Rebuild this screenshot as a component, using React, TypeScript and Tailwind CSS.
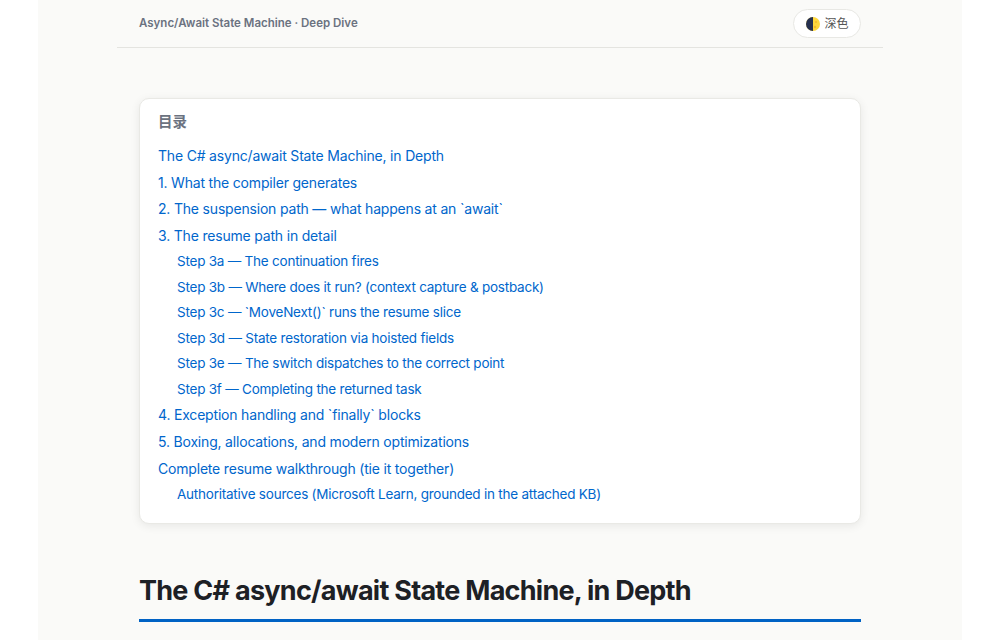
const items: [string, number][] = [
  ["The C# async/await State Machine, in Depth", 0],
  ["1. What the compiler generates", 0],
  ["2. The suspension path — what happens at an `await`", 0],
  ["3. The resume path in detail", 0],
  ["Step 3a — The continuation fires", 1],
  ["Step 3b — Where does it run? (context capture & postback)", 1],
  ["Step 3c — `MoveNext()` runs the resume slice", 1],
  ["Step 3d — State restoration via hoisted fields", 1],
  ["Step 3e — The switch dispatches to the correct point", 1],
  ["Step 3f — Completing the returned task", 1],
  ["4. Exception handling and `finally` blocks", 0],
  ["5. Boxing, allocations, and modern optimizations", 0],
  ["Complete resume walkthrough (tie it together)", 0],
  ["Authoritative sources (Microsoft Learn, grounded in the attached KB)", 1],
]

function MoonIcon() {
  return (
    <svg width="14" height="14" viewBox="0 0 14 14">
      <circle cx="7" cy="7" r="7" fill="#ffd83d" />
      <path d="M7 0a7 7 0 0 0 0 14z" fill="#26304f" />
      <circle cx="10" cy="5" r="1" fill="#f2b92c" />
      <circle cx="9" cy="10" r="1.2" fill="#f2b92c" />
    </svg>
  )
}

export default function App() {
  return (
    <div className="h-[640px] overflow-hidden bg-white font-['Inter','Noto_Sans_CJK_SC',sans-serif]">
      <div className="mx-auto h-full w-[924px] bg-[#fafaf8] px-[79px]">
        <header className="flex h-[48px] items-center justify-between border-b border-[#e4e4e0] px-[22px]">
          <span className="pt-[1px] text-[11.5px] font-semibold text-[#6b7280]">Async/Await State Machine · Deep Dive</span>
          <button className="flex h-[29px] w-[68px] items-center justify-center gap-[4px] rounded-full border border-[#e8e8e4] bg-white pl-[1px] text-[12px] text-[#555]">
            <MoonIcon />
            <span>深色</span>
          </button>
        </header>
        <main className="px-[22px] pt-[50px]">
          <nav className="rounded-[10px] border border-[#e9e9e5] bg-white pb-[15.5px] pl-[18px] pr-[18px] pt-[13px] shadow-[0_2px_10px_rgba(0,0,0,0.08)]">
            <h2 className="mb-[11px] h-[20px] text-[14.5px] leading-[20px] font-semibold text-[#6b7280]">目录</h2>
            <ul>
              {items.map(([label, depth]) =>
                depth ? (
                  <li key={label} className="pl-[19px] text-[13.5px] leading-[25.5px] tracking-[-0.23px] text-[#0066cc]">{label}</li>
                ) : (
                  <li key={label} className="text-[14px] leading-[26.6px] tracking-[-0.19px] text-[#0066cc]">{label}</li>
                ),
              )}
            </ul>
          </nav>
          <h1 className="mt-[49px] border-b-[3px] border-[#0062c4] pb-[10px] text-[27px] leading-[36px] font-bold tracking-[-0.74px] text-[#1d2025]">
            The C# async/await State Machine, in Depth
          </h1>
        </main>
      </div>
    </div>
  )
}
